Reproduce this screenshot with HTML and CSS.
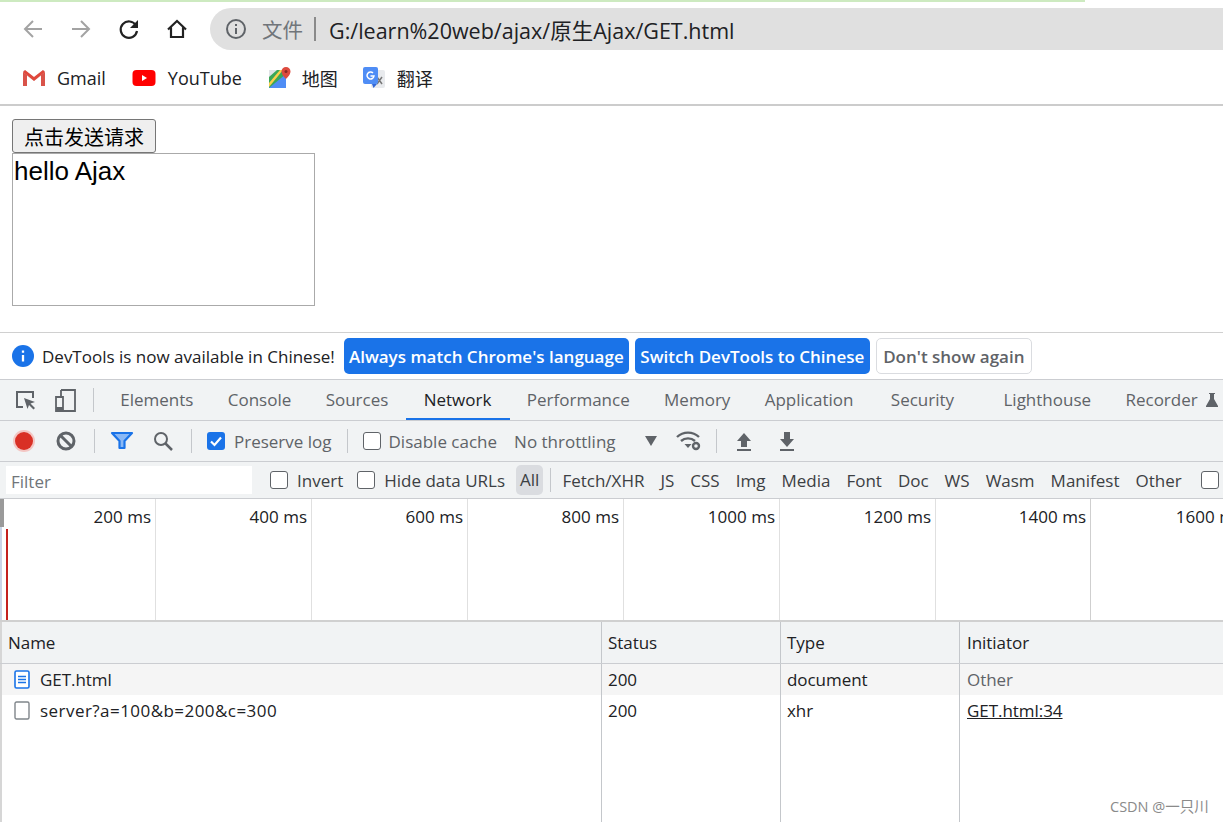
FILE: index.html
```html
<!DOCTYPE html>
<html lang="zh">
<head>
<meta charset="utf-8">
<title>GET.html</title>
<link rel="stylesheet" href="styles.css">
</head>
<body>
<div class="progress"></div>
<header class="toolbar">
  <svg class="nav" width="24" height="24" viewBox="0 0 24 24"><path d="M21 12H5M12 4l-8 8 8 8" fill="none" stroke="#a3a3a3" stroke-width="2"/></svg>
  <svg class="nav" width="24" height="24" viewBox="0 0 24 24"><path d="M3 12h16M12 4l8 8-8 8" fill="none" stroke="#a3a3a3" stroke-width="2"/></svg>
  <svg class="nav" width="24" height="24" viewBox="0 0 24 24"><path d="M19 8.500A8.200 8.200 0 1 0 20 14" fill="none" stroke="#222" stroke-width="2.200"/><path d="M21 3v8h-8z" fill="#222"/></svg>
  <svg class="nav" width="24" height="24" viewBox="0 0 24 24"><path d="M3 12.500 12 4l9 8.500M6 10.500V20h12v-9.500" fill="none" stroke="#222" stroke-width="2.200"/></svg>
  <div class="omnibox">
    <svg width="22" height="22" viewBox="0 0 22 22"><circle cx="11" cy="11" r="9" fill="none" stroke="#5f6368" stroke-width="2"/><path d="M11 10v6M11 6v2" stroke="#5f6368" stroke-width="2"/></svg>
    <span class="scheme">文件</span><span class="bar"></span><span class="url">G:/learn%20web/ajax/原生Ajax/GET.html</span>
  </div>
</header>
<nav class="bookmarks">
  <a class="bm bm-gmail"><svg width="26" height="20" viewBox="0 0 26 20"><path d="M2 3v15h4V8l7 5 7-5v10h4V3l-2-1-9 7-9-7z" fill="#e3e3e3"/><path d="M2 18V4l4 3v11zM24 18V4l-4 3v11z" fill="#d9534a"/><path d="M2 4l2-2 9 7 9-7 2 2-11 9z" fill="#e0483c"/></svg><span>Gmail</span></a>
  <a class="bm bm-yt"><svg width="24" height="18" viewBox="0 0 24 18"><rect x="0.500" y="1" width="23" height="16" rx="4" fill="#f00"/><path d="M10 6v6l5-3z" fill="#fff"/></svg><span>YouTube</span></a>
  <a class="bm bm-map"><svg width="24" height="24" viewBox="0 0 24 24"><path d="M1 4h17v18H1z" fill="#3aa757"/><path d="M1 22 18 8v14z" fill="#4f8df5"/><path d="M1 17 12 4h3L1 21z" fill="#fbd04a"/><path d="M1 4h8L1 11z" fill="#dfe3e6"/><path d="M18 1a4.500 4.500 0 0 1 4.500 4.500C22.500 9 18 13 18 13s-4.500-4-4.500-7.500A4.500 4.500 0 0 1 18 1z" fill="#dd4b3e"/><circle cx="18" cy="5.500" r="1.500" fill="#8a2a22"/></svg><span>地图</span></a>
  <a class="bm"><svg width="24" height="24" viewBox="0 0 24 24"><rect x="9" y="4" width="14" height="18" rx="2" fill="#e8eaed"/><path d="M15 11l5 7M20 11l-5 7" stroke="#777" stroke-width="1.500"/><rect x="1" y="1" width="15" height="17" rx="2" fill="#4f8df5"/><path d="M11 7a3.500 3.500 0 1 0 1 3H8.500" fill="none" stroke="#fff" stroke-width="1.500"/><path d="M10 18h5l-3.500 4z" fill="#3367d6"/></svg><span>翻译</span></a>
</nav>
<main class="page">
  <button class="send">点击发送请求</button>
  <div class="result">hello Ajax</div>
</main>
<section class="infobar">
  <svg width="22" height="22" viewBox="0 0 24 24"><circle cx="12" cy="12" r="12" fill="#1a73e8"/><path d="M12 11v7M12 6v2.500" stroke="#fff" stroke-width="2.500"/></svg>
  <span class="info-text">DevTools is now available in Chinese!</span>
  <button class="btn-blue">Always match Chrome's language</button>
  <button class="btn-blue">Switch DevTools to Chinese</button>
  <button class="btn-plain">Don't show again</button>
</section>
<section class="tabs">
  <svg class="tool" width="24" height="24" viewBox="0 0 24 24"><path d="M9 19H3V4h16v6" fill="none" stroke="#5f6368" stroke-width="2"/><path d="M10 10l11 4-4.500 1.500L21 20l-1.500 1.500-4.500-4.500L13.500 21z" fill="#5f6368"/></svg>
  <svg class="tool tool2" width="24" height="24" viewBox="0 0 24 24"><path d="M8 2h14v21H3v-14h7v14M8 8V2" fill="none" stroke="#5f6368" stroke-width="1.800"/><path d="M3 19h7v4H3z" fill="#5f6368"/></svg>
  <span class="sep sep-tabs"></span>
  <span class="tab">Elements</span>
  <span class="tab">Console</span>
  <span class="tab">Sources</span>
  <span class="tab active">Network</span>
  <span class="tab">Performance</span>
  <span class="tab">Memory</span>
  <span class="tab">Application</span>
  <span class="tab tab-sec">Security</span>
  <span class="tab tab-wide">Lighthouse</span>
  <span class="tab tab-last">Recorder</span>
  <svg class="flask" width="14" height="16" viewBox="0 0 14 16"><path d="M4 1h6v1H9v5l4 7v1H1v-1l4-7V2H4z" fill="#5f6368"/></svg>
</section>
<section class="net-bar">
  <span class="rec"></span>
  <svg class="stop" width="22" height="22" viewBox="0 0 22 22"><circle cx="11" cy="11" r="8" fill="none" stroke="#5f6368" stroke-width="3"/><path d="M5.500 5.500l11 11" stroke="#5f6368" stroke-width="3"/></svg>
  <span class="sep sep-a"></span>
  <svg class="filter-ic" width="24" height="20" viewBox="0 0 24 20"><path d="M2 2h20l-7.500 8v7h-5v-7z" fill="#8ab8f5" stroke="#1a73e8" stroke-width="2.200" stroke-linejoin="round"/></svg>
  <svg class="search-ic" width="22" height="22" viewBox="0 0 22 22"><circle cx="9" cy="9" r="6" fill="none" stroke="#5f6368" stroke-width="2"/><path d="M13.500 13.500 20 20" stroke="#5f6368" stroke-width="2.500"/></svg>
  <span class="sep sep-b"></span>
  <label class="check check-preserve"><span class="box on"><svg width="18" height="18" viewBox="0 0 18 18"><path d="M4 9.500 7.500 13 14 5.500" fill="none" stroke="#fff" stroke-width="2.200"/></svg></span>Preserve log</label>
  <span class="sep sep-c"></span>
  <label class="check check-cache"><span class="box"></span>Disable cache</label>
  <span class="throttle">No throttling</span>
  <span class="caret"></span>
  <svg class="wifi" width="26" height="22" viewBox="0 0 26 22"><path d="M1 7a16 16 0 0 1 22 0M5 11a10.500 10.500 0 0 1 14 0" fill="none" stroke="#5f6368" stroke-width="2.400"/><path d="M8.500 14h7L12 18z" fill="#5f6368"/><circle cx="20" cy="16" r="3" fill="none" stroke="#5f6368" stroke-width="2.400"/></svg>
  <span class="sep sep-short"></span>
  <svg class="arrow" width="18" height="22" viewBox="0 0 18 22"><path d="M9 3l7 8h-4v6H6v-6H2zM2 19h14v2H2z" fill="#5f6368"/></svg>
  <svg class="arrow" width="18" height="22" viewBox="0 0 18 22"><path d="M6 2h6v7h4l-7 8-7-8h4zM2 19h14v2H2z" fill="#5f6368"/></svg>
</section>
<section class="filter-bar">
  <input class="filter-input" placeholder="Filter">
  <label class="check check-invert"><span class="box"></span>Invert</label>
  <label class="check check-hide"><span class="box"></span>Hide data URLs</label>
  <span class="type all">All</span>
  <span class="sep sep-types"></span>
  <span class="type">Fetch/XHR</span>
  <span class="type">JS</span>
  <span class="type">CSS</span>
  <span class="type">Img</span>
  <span class="type">Media</span>
  <span class="type">Font</span>
  <span class="type">Doc</span>
  <span class="type">WS</span>
  <span class="type">Wasm</span>
  <span class="type">Manifest</span>
  <span class="type">Other</span>
  <span class="box box-end"></span>
</section>
<section class="timeline">
  <div class="overview"></div>
  <div class="marker"></div>
  <div class="tick">200 ms</div>
  <div class="tick">400 ms</div>
  <div class="tick">600 ms</div>
  <div class="tick">800 ms</div>
  <div class="tick">1000 ms</div>
  <div class="tick">1200 ms</div>
  <div class="tick tick-7">1400 ms</div>
  <div class="tick tick-last">1600 ms</div>
</section>
<section class="table">
  <div class="row head"><div>Name</div><div>Status</div><div>Type</div><div>Initiator</div></div>
  <div class="row"><div class="name stripe"><svg width="16" height="19" viewBox="0 0 16 19"><rect x="1" y="1" width="14" height="17" rx="1.500" fill="#fff" stroke="#1a73e8" stroke-width="1.600"/><path d="M4 6.500h8M4 9.500h8M4 12.500h8" stroke="#1a73e8" stroke-width="1.300"/></svg>GET.html</div><div class="stripe">200</div><div class="stripe">document</div><div class="stripe muted">Other</div></div>
  <div class="row"><div class="name"><svg width="16" height="19" viewBox="0 0 16 19"><rect x="1" y="1" width="14" height="17" rx="1.500" fill="#fff" stroke="#80868b" stroke-width="1.400"/></svg><span class="query">server?a=100&amp;b=200&amp;c=300</span></div><div>200</div><div>xhr</div><div class="link">GET.html:34</div></div>
  <div class="row fill"><div></div><div></div><div></div><div></div></div>
</section>
<div class="watermark">CSDN @一只川</div>
</body>
</html>
```
FILE: styles.css
```css
* { box-sizing: border-box; }
html, body { margin: 0; height: 100%; }
body {
  width: 1223px; height: 822px; overflow: hidden; position: relative;
  font-family: "Open Sans", "Noto Sans CJK SC", sans-serif;
  background: #fff; color: #202124;
  display: flex; flex-direction: column;
}
body > * { flex: none; }
svg { flex: none; display: block; }
.progress { height: 2px; width: 1085px; background: #cdeac0; }
.toolbar { height: 54px; display: flex; align-items: center; padding-left: 21px; }
.nav { margin-right: 24px; }
.omnibox {
  margin-left: -3px; flex: 1; height: 42px; background: #e0e0e0;
  border-radius: 21px 0 0 21px; display: flex; align-items: center; padding-left: 15px;
  font-size: 21.500px;
}
.scheme { margin-left: 15px; color: #70757a; font-size: 20.500px; }
.bar { width: 2px; height: 24px; background: #8a8a8a; margin: 0 13px 0 11px; }
.url { color: #202124; }
.bookmarks { height: 50px; display: flex; align-items: center; padding: 0 0 4px 21px; border-bottom: 2px solid #ccc; }
.bm { display: flex; align-items: center; gap: 11px; font-size: 18px; margin-right: 26px; }
.bm-gmail { gap: 10px; }
.bm-yt { gap: 12px; }
.bm-map { gap: 10px; margin-right: 24px; }
.page { height: 227px; padding: 13px 12px 0; border-bottom: 1px solid #d0d0d0; font-family: "Liberation Sans", "Noto Sans CJK SC", sans-serif; display: flex; flex-direction: column; align-items: flex-start; }
.send {
  width: 144px; height: 34px; padding: 0; font: 20px "Noto Sans CJK SC", sans-serif; color: #000;
  background: #efefef; border: 1px solid #767676; border-radius: 3px;
}
.result { width: 303px; height: 153px; border: 1px solid #aaa; font: 26px/34px "Liberation Sans", sans-serif; padding-left: 1px; color: #000; }
.infobar { height: 47px; display: flex; align-items: center; padding-left: 12px; font-size: 17px; border-bottom: 1px solid #cbcdd1; }
.info-text { margin-left: 8px; margin-right: 9px; color: #202124; }
.infobar button { height: 36px; border-radius: 5px; font-family: inherit; font-size: 17px; padding: 0; margin-right: 6px; white-space: nowrap; }
.btn-blue { background: #1a73e8; color: #fff; border: 0; font-weight: 600; width: 285px; }
.btn-blue + .btn-blue { width: 235px; }
.btn-plain { background: #fff; color: #5f6368; border: 1px solid #dadce0; font-weight: 600; width: 156px; }
.tabs, .net-bar, .filter-bar { background: #f1f3f4; display: flex; align-items: center; border-bottom: 1px solid #cbcdd1; white-space: nowrap; font-size: 17px; color: #5f6368; overflow: hidden; }
.tabs { height: 41px; padding-left: 14px; }
.tool2 { margin-left: 15px; }
.sep { width: 1px; height: 24px; background: #c4c7cb; flex: none; }
.sep-tabs { margin: 0 9px 0 16px; }
.tab { height: 40px; line-height: 40px; padding: 0 17.200px; position: relative; }
.tab.active { color: #202124; border-bottom: 2px solid #1a73e8; padding: 0 18.200px; }
.tab-sec { margin-left: 3px; }
.tab-wide { margin-left: 15px; }
.tab-last { padding-right: 7px; }
.net-bar { height: 41px; padding-left: 15px; }
.rec { width: 18px; height: 18px; border-radius: 50%; background: #d93025; box-shadow: 0 0 0 2px #f3c6c3; flex: none; }
.stop { margin-left: 22px; }
.sep-a { margin: 0 15px 0 17px; }
.search-ic { margin-left: 18px; }
.sep-b { margin: 0 15px 0 17px; }
.check { display: flex; align-items: center; gap: 9px; }
.box { width: 18px; height: 18px; border: 1.500px solid #5f6368; border-radius: 3px; background: #fff; flex: none; display: block; }
.box.on { background: #1a73e8; border: 0; }
.sep-c { margin: 0 15px; }
.check-cache { gap: 8px; margin-right: 17px; }
.caret { width: 0; height: 0; border-left: 6px solid transparent; border-right: 6px solid transparent; border-top: 10px solid #5f6368; margin: 0 19px 0 29px; }
.sep-short { margin: 0 18px 0 14px; }
.arrow + .arrow { margin-left: 25px; }
.filter-bar { height: 37px; padding-left: 6px; }
.filter-input { width: 246px; height: 28px; border: 0; background: #fff; font: 17px "Open Sans", sans-serif; padding: 2px 5px 0; margin-right: 18px; outline: 0; }
.filter-input::placeholder { color: #70757a; }
.check-invert { margin-right: 14px; }
.check-hide { margin-right: 11px; }
.filter-bar .check { color: #3c4043; }
.type { padding: 0 4px; margin-right: 8px; color: #3c4043; }
.all { background: #dadce0; border-radius: 5px; height: 30px; line-height: 30px; margin-right: 7px; }
.sep-types { margin-right: 7px; }
.box-end { margin-left: 7px; }
.timeline { height: 123px; display: flex; border-bottom: 2px solid #d0d0d0; position: relative; font-size: 17px; color: #202124; overflow: hidden; }
.overview { position: absolute; left: 0; top: 0; width: 4px; height: 28px; background: #9a9a9a; }
.overview::after { content: ""; position: absolute; left: 0; top: 28px; width: 2px; height: 93px; background: #cbd5e8; }
.marker { position: absolute; left: 6px; top: 30px; width: 2px; height: 91px; background: #c5221f; }
.tick { width: 156px; flex: none; border-right: 1px solid #e0e0e0; text-align: right; padding: 6px 4px 0 0; white-space: nowrap; }
.tick-7 { width: 155px; border-right-color: #cfcfcf; }
.tick-last { border: 0; }
.table { font-size: 17px; letter-spacing: -0.050px; color: #202124; }
.row { display: grid; grid-template-columns: 602px 179px 179px 1fr; height: 31px; align-items: stretch; }
.row > div { padding-left: 6px; line-height: 31px; border-right: 1px solid #c4c7cb; white-space: nowrap; }
.row > div:first-child { border-left: 2px solid #d6d6d6; }
.row > div:last-child { border-right: 0; padding-left: 7px; }
.head { height: 42px; background: #f1f3f4; border-bottom: 1px solid #cbcdd1; }
.head > div { line-height: 41px; }
.head > div:first-child { padding-left: 6px; }
.stripe { background: #f5f5f5; }
.name { display: flex; align-items: center; gap: 10px; padding-left: 12px !important; }
.query { letter-spacing: 0.450px; }
.muted { color: #5f6368; }
.link { text-decoration: underline; }
.fill { height: 100px; }
.watermark { position: absolute; left: 1110px; top: 795px; font-size: 14.500px; color: #8a8a8a; }
```
